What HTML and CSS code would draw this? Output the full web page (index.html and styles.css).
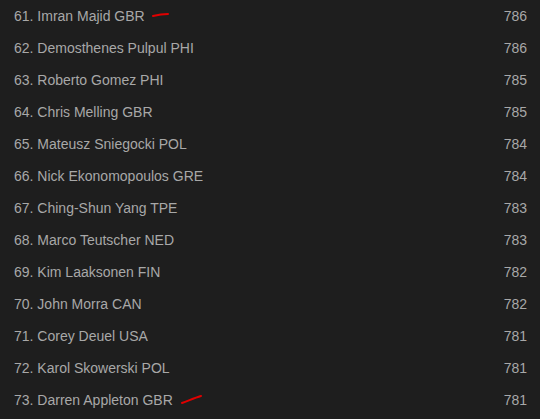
FILE: index.html
```html
<!DOCTYPE html>
<html lang="en">
<head>
    <meta charset="UTF-8">
    <title>Rankings</title>
    <link rel="stylesheet" href="styles.css">
</head>
<body>
    <ul class="ranking">
        <li><span class="name">61. Imran Majid GBR <svg class="mark" width="18" height="6" viewBox="0 0 18 6"><path d="M1 4 C5 3 10 2 16 2" /></svg></span><span class="score">786</span></li>
        <li><span class="name">62. Demosthenes Pulpul PHI</span><span class="score">786</span></li>
        <li><span class="name">63. Roberto Gomez PHI</span><span class="score">785</span></li>
        <li><span class="name">64. Chris Melling GBR</span><span class="score">785</span></li>
        <li><span class="name">65. Mateusz Sniegocki POL</span><span class="score">784</span></li>
        <li><span class="name">66. Nick Ekonomopoulos GRE</span><span class="score">784</span></li>
        <li><span class="name">67. Ching-Shun Yang TPE</span><span class="score">783</span></li>
        <li><span class="name">68. Marco Teutscher NED</span><span class="score">783</span></li>
        <li><span class="name">69. Kim Laaksonen FIN</span><span class="score">782</span></li>
        <li><span class="name">70. John Morra CAN</span><span class="score">782</span></li>
        <li><span class="name">71. Corey Deuel USA</span><span class="score">781</span></li>
        <li><span class="name">72. Karol Skowerski POL</span><span class="score">781</span></li>
        <li><span class="name">73. Darren Appleton GBR <svg class="mark mark-up" width="22" height="10" viewBox="0 0 22 10"><path d="M1 8 C7 6 13 3 20 1" /></svg></span><span class="score">781</span></li>
    </ul>
</body>
</html>
```

FILE: styles.css
```css
body {
    margin: 0;
    background-color: #1e1e1e;
    font-family: "Liberation Sans", Arial, sans-serif;
    font-size: 14px;
    color: #a8a8a8;
}

.ranking {
    list-style: none;
    margin: 0;
    padding: 0 13px 0 14px;
}

.ranking li {
    display: flex;
    justify-content: space-between;
    align-items: center;
    height: 32px;
}

.name {
    display: flex;
    align-items: center;
}

/* red pen marks */
.mark {
    margin-left: 7px;
    margin-top: -3px;
}

.mark path {
    fill: none;
    stroke: #e00000;
    stroke-width: 2;
    stroke-linecap: round;
}

.mark-up {
    margin-left: 8px;
    margin-top: -1px;
}
```
